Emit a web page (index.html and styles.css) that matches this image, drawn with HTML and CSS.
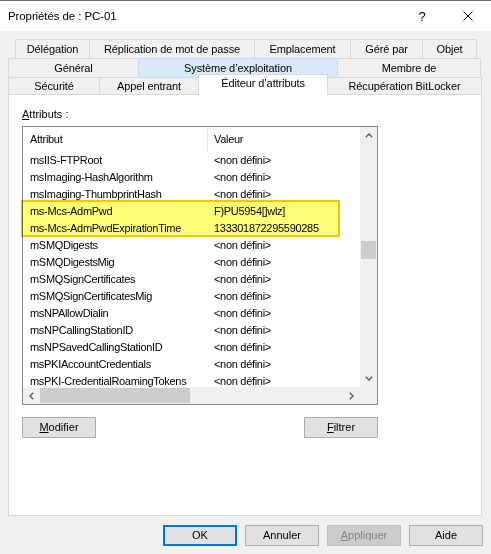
FILE: index.html
```html
<!DOCTYPE html>
<html lang="fr">
<head>
<meta charset="utf-8">
<title>Propriétés de : PC-01</title>
<link rel="stylesheet" href="styles.css">
</head>
<body>
<div class="window">
  <div class="titlebar">
    <span class="title">Propriétés de : PC-01</span>
    <span class="cap help">?</span>
    <span class="cap close">
      <svg width="10" height="10" viewBox="0 0 10 10"><path d="M0.5 0.5 L9.5 9.5 M9.5 0.5 L0.5 9.5" stroke="#000" stroke-width="1" fill="none"/></svg>
    </span>
  </div>
  <div class="client">
    <div class="tabs">
      <div class="tabrow row1">
        <div class="tab w-deleg">Délégation</div>
        <div class="tab w-repl">Réplication de mot de passe</div>
        <div class="tab w-empl">Emplacement</div>
        <div class="tab w-gere">Géré par</div>
        <div class="tab w-objet last">Objet</div>
      </div>
      <div class="tabrow row2">
        <div class="tab w-general">Général</div>
        <div class="tab w-systeme hot">Système d’exploitation</div>
        <div class="tab w-membre last">Membre de</div>
      </div>
      <div class="tabrow row3">
        <div class="tab w-secu">Sécurité</div>
        <div class="tab w-appel">Appel entrant</div>
        <div class="tab w-editeur selected">Éditeur d’attributs</div>
        <div class="tab w-recup last after-sel">Récupération BitLocker</div>
      </div>
    </div>
    <div class="panel">
      <div class="label"><u>A</u>ttributs :</div>
      <div class="listbox">
        <div class="lb-top">
          <div class="lb-view">
            <div class="lv-header">
              <div class="hc c1">Attribut</div>
              <div class="hc c2">Valeur</div>
            </div>
            <div class="lv-row"><span class="c1">msIIS-FTPRoot</span><span class="c2">&lt;non défini&gt;</span></div>
            <div class="lv-row"><span class="c1">msImaging-HashAlgorithm</span><span class="c2">&lt;non défini&gt;</span></div>
            <div class="lv-row"><span class="c1">msImaging-ThumbprintHash</span><span class="c2">&lt;non défini&gt;</span></div>
            <div class="lv-row"><span class="c1">ms-Mcs-AdmPwd</span><span class="c2">F)PU5954[]wlz]</span></div>
            <div class="lv-row"><span class="c1">ms-Mcs-AdmPwdExpirationTime</span><span class="c2">133301872295590285</span></div>
            <div class="lv-row"><span class="c1">mSMQDigests</span><span class="c2">&lt;non défini&gt;</span></div>
            <div class="lv-row"><span class="c1">mSMQDigestsMig</span><span class="c2">&lt;non défini&gt;</span></div>
            <div class="lv-row"><span class="c1">mSMQSignCertificates</span><span class="c2">&lt;non défini&gt;</span></div>
            <div class="lv-row"><span class="c1">mSMQSignCertificatesMig</span><span class="c2">&lt;non défini&gt;</span></div>
            <div class="lv-row"><span class="c1">msNPAllowDialin</span><span class="c2">&lt;non défini&gt;</span></div>
            <div class="lv-row"><span class="c1">msNPCallingStationID</span><span class="c2">&lt;non défini&gt;</span></div>
            <div class="lv-row"><span class="c1">msNPSavedCallingStationID</span><span class="c2">&lt;non défini&gt;</span></div>
            <div class="lv-row"><span class="c1">msPKIAccountCredentials</span><span class="c2">&lt;non défini&gt;</span></div>
            <div class="lv-row"><span class="c1">msPKI-CredentialRoamingTokens</span><span class="c2">&lt;non défini&gt;</span></div>
          </div>
          <div class="vscroll">
            <div class="sbtn"><svg width="8" height="5" viewBox="0 0 8 5"><path d="M0.8 4.2 L4 1 L7.2 4.2" stroke="#606060" stroke-width="1.5" fill="none"/></svg></div>
            <div class="vtrack"><div class="vthumb"></div></div>
            <div class="sbtn"><svg width="8" height="5" viewBox="0 0 8 5"><path d="M0.8 0.8 L4 4 L7.2 0.8" stroke="#606060" stroke-width="1.5" fill="none"/></svg></div>
          </div>
        </div>
        <div class="lb-bottom">
          <div class="hscroll">
            <div class="sbtn"><svg width="5" height="8" viewBox="0 0 5 8"><path d="M4.2 0.8 L1 4 L4.2 7.2" stroke="#606060" stroke-width="1.5" fill="none"/></svg></div>
            <div class="htrack"><div class="hthumb"></div></div>
            <div class="sbtn"><svg width="5" height="8" viewBox="0 0 5 8"><path d="M0.8 0.8 L4 4 L0.8 7.2" stroke="#606060" stroke-width="1.5" fill="none"/></svg></div>
          </div>
          <div class="corner"></div>
        </div>
        <div class="highlight"></div>
      </div>
      <div class="panel-buttons">
        <button class="btn"><u>M</u>odifier</button>
        <button class="btn"><u>F</u>iltrer</button>
      </div>
    </div>
    <div class="footer">
      <button class="btn default">OK</button>
      <button class="btn">Annuler</button>
      <button class="btn disabled"><u>A</u>ppliquer</button>
      <button class="btn">Aide</button>
    </div>
  </div>
</div>
</body>
</html>
```
FILE: styles.css
```css
* { box-sizing: border-box; }
html, body { margin: 0; padding: 0; }
body {
  width: 491px;
  height: 554px;
  overflow: hidden;
  background: #f0f0f0;
  font-family: "Liberation Sans", Arial, sans-serif;
  font-size: 11px;
  color: #000;
}
.window {
  width: 491px;
  height: 554px;
  border-top: 1px solid #6b6b6b;
  background: #f0f0f0;
  overflow: hidden;
}
.titlebar {
  height: 30px;
  background: #fff;
  display: flex;
  align-items: center;
  padding-left: 8px;
}
.title { font-size: 11.5px; letter-spacing: -0.1px; flex: 1; }
.cap {
  width: 46px;
  height: 30px;
  display: flex;
  align-items: center;
  justify-content: center;
}
.help { font-size: 13px; }

.client { padding: 8px 9px 8px 8px; }

.tabrow { display: flex; align-items: flex-start; }
.row1 { margin-left: 7px; height: 19px; }
.row2 { height: 19px; }
.row3 { height: 18px; }
.tab {
  height: 100%;
  border-top: 1px solid #d9d9d9;
  border-left: 1px solid #d9d9d9;
  display: flex;
  align-items: center;
  justify-content: center;
  white-space: nowrap;
  background: #f0f0f0;
  padding-bottom: 1px;
  letter-spacing: -0.1px;
}
.tab.last { border-right: 1px solid #d9d9d9; }
.row3 .tab { border-bottom: 1px solid #d9d9d9; }
.tab.hot { background: #d8eaf9; border-color: #c5dcf0; }
.row3 .tab.selected {
  height: 21px;
  margin-top: -3px;
  background: #fff;
  border-right: 1px solid #d9d9d9;
  border-bottom: none;
  padding-bottom: 4px;
}
.tab.after-sel { border-left: none; }

.w-deleg { width: 74px; }
.w-repl { width: 165px; }
.w-empl { width: 96px; }
.w-gere { width: 72px; }
.w-objet { width: 55px; }
.w-general { width: 130px; }
.w-systeme { width: 199px; }
.w-membre { width: 144px; }
.w-secu { width: 91px; }
.w-appel { width: 99px; }
.w-editeur { width: 130px; }
.w-recup { width: 154px; }

.panel {
  width: 474px;
  height: 421px;
  background: #fff;
  border: 1px solid #d9d9d9;
  border-top: none;
  padding: 12px 0 0 13px;
}
.label { height: 14px; line-height: 14px; margin-bottom: 5px; }

.listbox {
  position: relative;
  width: 356px;
  height: 279px;
  border: 1px solid #828790;
  background: #fff;
}
.lb-top { display: flex; height: 260px; }
.lb-view { width: 337px; overflow: hidden; letter-spacing: -0.3px; }
.lv-header {
  display: grid;
  grid-template-columns: 185px 1fr;
  height: 25px;
}
.hc { line-height: 25px; white-space: nowrap; }
.hc.c1 { padding-left: 7px; border-right: 1px solid #e5e5e5; }
.hc.c2 { padding-left: 6px; }
.lv-row {
  display: grid;
  grid-template-columns: 185px 1fr;
  height: 17px;
  line-height: 17px;
  white-space: nowrap;
}
.lv-row .c1 { padding-left: 7px; overflow: hidden; }
.lv-row .c2 { padding-left: 6px; overflow: hidden; }

.vscroll {
  width: 17px;
  background: #f0f0f0;
  display: flex;
  flex-direction: column;
}
.sbtn {
  width: 17px;
  height: 17px;
  display: flex;
  align-items: center;
  justify-content: center;
  flex: none;
}
.vtrack { flex: 1; }
.vthumb {
  margin: 97px 1px 0 1px;
  height: 18px;
  background: #cdcdcd;
}
.lb-bottom { display: flex; height: 17px; }
.hscroll {
  width: 337px;
  background: #f0f0f0;
  display: flex;
}
.htrack { flex: 1; padding: 1px 0; }
.hthumb { width: 150px; height: 15px; background: #cdcdcd; }
.corner { width: 17px; background: #f0f0f0; }

.highlight {
  position: absolute;
  left: -2px;
  top: 73px;
  width: 319px;
  height: 37px;
  border: 2px solid #f7c400;
  background: #ffff78;
  mix-blend-mode: multiply;
  pointer-events: none;
}

.btn {
  width: 74px;
  height: 21px;
  padding: 0;
  margin: 0;
  background: #e1e1e1;
  border: 1px solid #adadad;
  font-family: "Liberation Sans", Arial, sans-serif;
  font-size: 11px;
  color: #000;
  text-align: center;
  line-height: 19px;
}
.btn.default { border-color: #0078d7; box-shadow: inset 0 0 0 1px #0078d7; }
.btn.disabled { background: #cccccc; border-color: #bfbfbf; color: #838383; }

.panel-buttons {
  width: 356px;
  margin-top: 12px;
  display: flex;
  justify-content: space-between;
}
.footer {
  margin-top: 9px;
  margin-right: -1px;
  display: flex;
  justify-content: flex-end;
  gap: 8px;
}
```
